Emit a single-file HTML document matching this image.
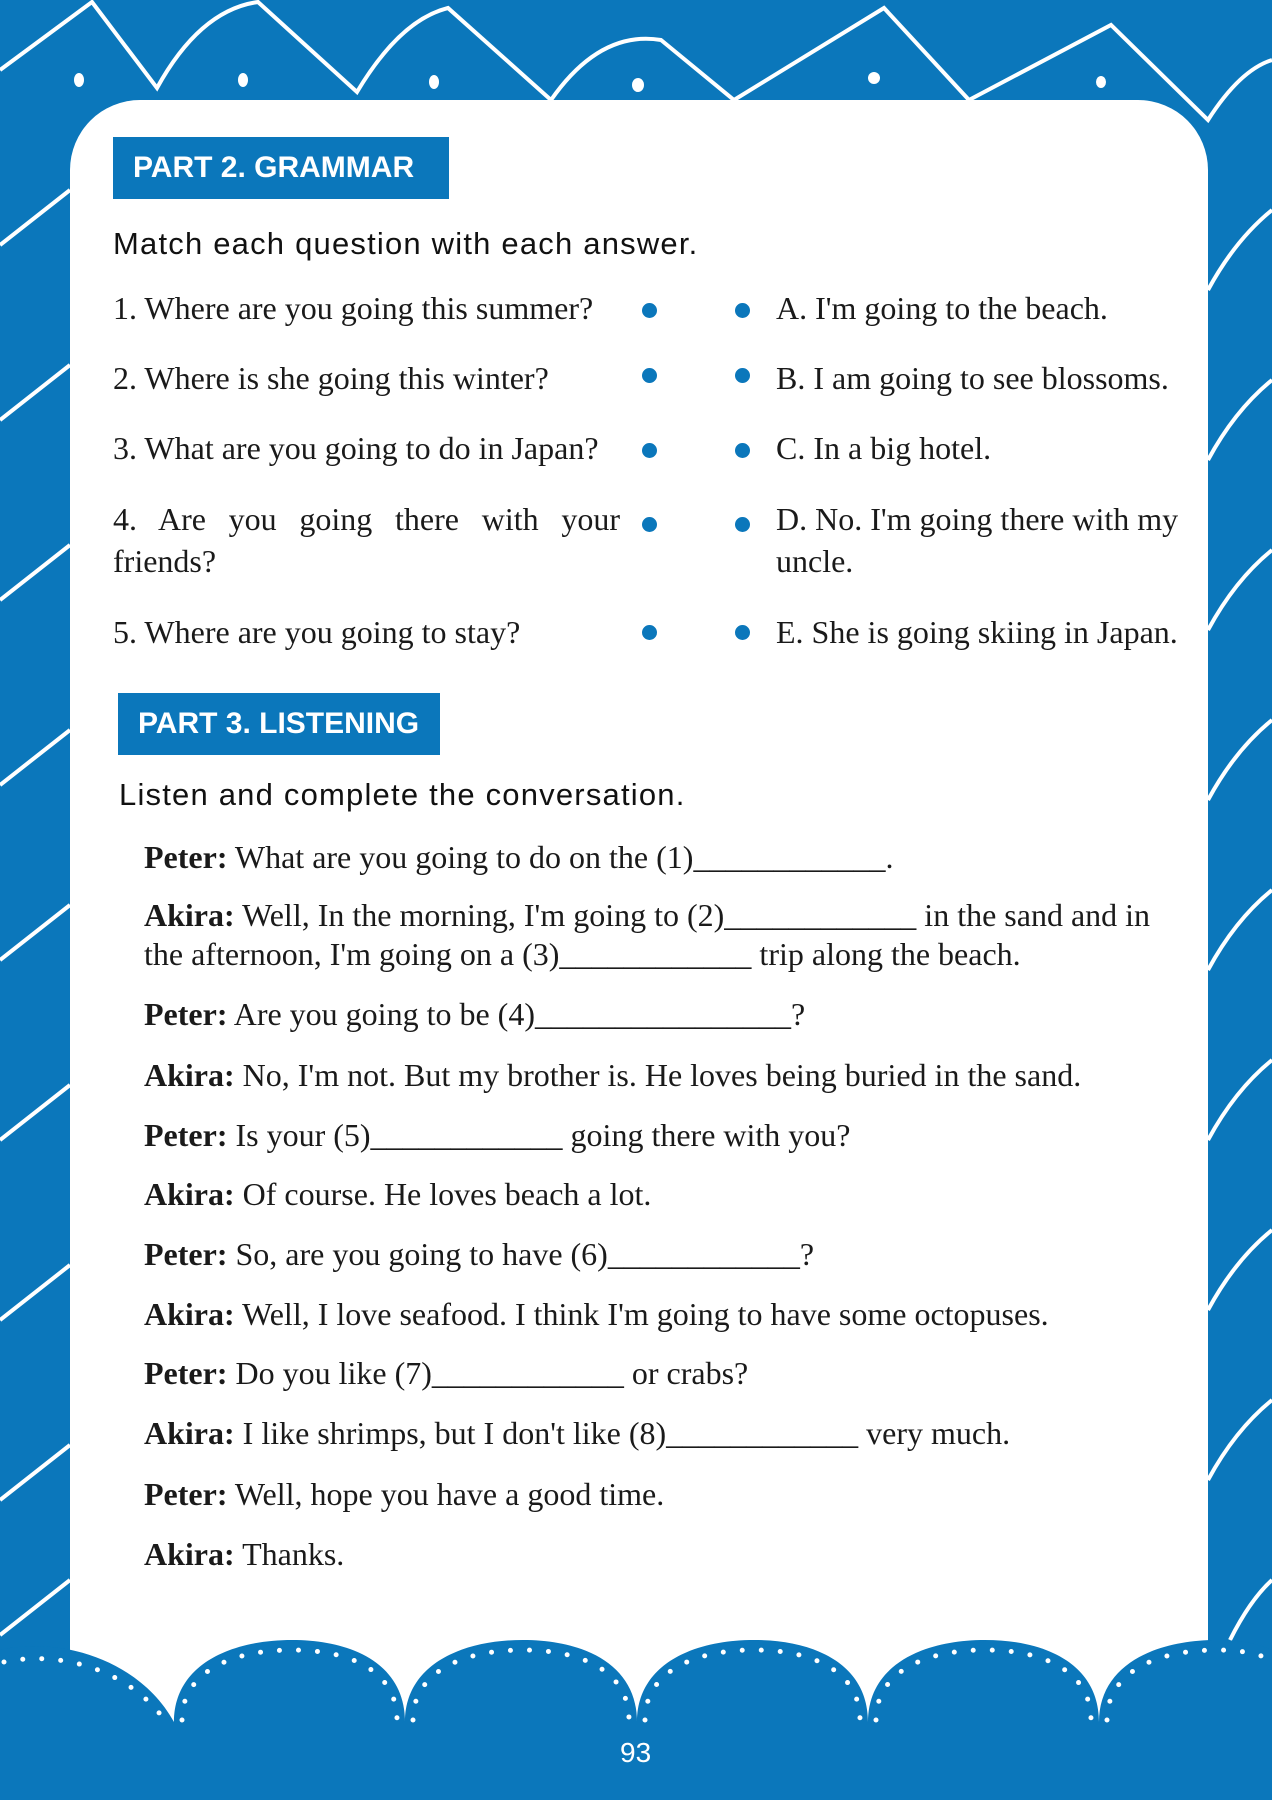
<!DOCTYPE html>
<html><head><meta charset="utf-8"><style>
*{margin:0;padding:0;box-sizing:border-box}
body{width:1272px;height:1800px;background:#0b77bb;position:relative;overflow:hidden;font-family:"Liberation Serif",serif;color:#1a1a1a}
.card{position:absolute;left:70px;top:100px;width:1138px;height:1630px;background:#fff;border-radius:70px 70px 0 0}
.hdr{position:absolute;background:#0b77bb;color:#fff;font-family:"Liberation Sans",sans-serif;font-weight:bold;font-size:30px;display:flex;align-items:center;padding-left:20px}
.sans{position:absolute;font-family:"Liberation Sans",sans-serif;font-size:31px;letter-spacing:1.2px;color:#111}
.t{position:absolute;font-size:32px;white-space:nowrap}
.dot{position:absolute;width:15px;height:15px;border-radius:50%;background:#0b77bb}
b{font-weight:bold}
</style></head><body>
<svg width="1272" height="1800" style="position:absolute;left:0;top:0" fill="none" stroke="#fff" stroke-width="4">
<path d="M0 70 L92 2 L157 88 Q200 10 258 2 L357 92 Q400 20 448 8 L551 100 Q600 30 661 40 L734 100 L884 8 L969 100 L1111 25 L1208 120 Q1240 70 1272 60"/>
<path d="M0 245 L70 190 M0 420 L70 365 M0 600 L70 545 M0 785 L70 730 M0 960 L70 905 M0 1140 L70 1085 M0 1320 L70 1265 M0 1500 L70 1445 M0 1635 L70 1580"/>
<path d="M1208 290 Q1235 240 1272 210 M1208 460 Q1235 410 1272 380 M1208 630 Q1235 580 1272 550 M1208 800 Q1235 750 1272 720 M1208 970 Q1235 920 1272 890 M1208 1140 Q1235 1090 1272 1060 M1208 1310 Q1235 1260 1272 1230 M1208 1480 Q1235 1430 1272 1400 M1230 1640 Q1250 1600 1272 1580"/>
<g fill="#fff" stroke="none"><ellipse cx="79" cy="80" rx="5" ry="7"/><ellipse cx="243" cy="80" rx="5" ry="7"/><ellipse cx="434" cy="82" rx="5" ry="7"/><ellipse cx="638" cy="85" rx="6" ry="7"/><ellipse cx="874" cy="78" rx="6" ry="6"/><ellipse cx="1101" cy="82" rx="5" ry="6"/></g>
</svg>
<div class="card"></div>
<svg width="1272" height="1800" style="position:absolute;left:0;top:0">
<path fill="#0b77bb" d="M0 1650 C60 1636 140 1660 174 1722 C174 1665 230 1640 292 1640 C354 1640 405 1665 405 1722 C405 1665 461 1640 523 1640 C585 1640 637 1665 637 1722 C637 1665 692 1640 754 1640 C816 1640 868 1665 868 1722 C868 1665 923 1640 985 1640 C1047 1640 1099 1665 1099 1722 C1099 1665 1155 1640 1217 1640 C1245 1640 1260 1645 1272 1650 L1272 1800 L0 1800 Z"/>
<path fill="none" stroke="#fff" stroke-width="5" stroke-linecap="round" stroke-dasharray="0 19" d="M4 1662 C60 1650 130 1670 166 1722 M182 1720 C182 1672 232 1650 292 1650 C352 1650 397 1672 397 1720 M413 1720 C413 1672 463 1650 523 1650 C583 1650 629 1672 629 1720 M645 1720 C645 1672 694 1650 754 1650 C814 1650 860 1672 860 1720 M876 1720 C876 1672 925 1650 985 1650 C1045 1650 1091 1672 1091 1720 M1107 1720 C1107 1672 1157 1650 1217 1650 C1245 1650 1260 1655 1272 1660"/>
</svg>
<div class="t" style="left:620px;top:1737px;color:#fff;font-family:'Liberation Sans',sans-serif;font-size:28px">93</div>

<div class="hdr" style="left:113px;top:137px;width:336px;height:62px">PART 2. GRAMMAR</div>
<div class="sans" style="left:113px;top:226px">Match each question with each answer.</div>

<div class="t" style="left:113px;top:290px">1. Where are you going this summer?</div>
<div class="t" style="left:113px;top:360px">2. Where is she going this winter?</div>
<div class="t" style="left:113px;top:430px">3. What are you going to do in Japan?</div>
<div class="t" style="left:113px;top:501px;width:507px;text-align:justify;text-align-last:justify;white-space:normal">4. Are you going there with your</div>
<div class="t" style="left:113px;top:543px">friends?</div>
<div class="t" style="left:113px;top:614px">5. Where are you going to stay?</div>
<div class="dot" style="left:642px;top:303px"></div><div class="dot" style="left:735px;top:303px"></div>
<div class="dot" style="left:642px;top:368px"></div><div class="dot" style="left:735px;top:368px"></div>
<div class="dot" style="left:642px;top:443px"></div><div class="dot" style="left:735px;top:443px"></div>
<div class="dot" style="left:642px;top:517px"></div><div class="dot" style="left:735px;top:517px"></div>
<div class="dot" style="left:642px;top:625px"></div><div class="dot" style="left:735px;top:625px"></div>
<div class="t" style="left:776px;top:290px">A. I'm going to the beach.</div>
<div class="t" style="left:776px;top:360px">B. I am going to see blossoms.</div>
<div class="t" style="left:776px;top:430px">C. In a big hotel.</div>
<div class="t" style="left:776px;top:501px">D. No. I'm going there with my</div>
<div class="t" style="left:776px;top:543px">uncle.</div>
<div class="t" style="left:776px;top:614px">E. She is going skiing in Japan.</div>

<div class="hdr" style="left:118px;top:693px;width:322px;height:62px">PART 3. LISTENING</div>
<div class="sans" style="left:119px;top:777px">Listen and complete the conversation.</div>

<div class="t" style="left:144px;top:839px"><b>Peter:</b> What are you going to do on the (1)____________.</div>
<div class="t" style="left:144px;top:897px"><b>Akira:</b> Well, In the morning, I'm going to (2)____________ in the sand and in</div>
<div class="t" style="left:144px;top:936px">the afternoon, I'm going on a (3)____________ trip along the beach.</div>
<div class="t" style="left:144px;top:996px"><b>Peter:</b> Are you going to be (4)________________?</div>
<div class="t" style="left:144px;top:1057px"><b>Akira:</b> No, I'm not. But my brother is. He loves being buried in the sand.</div>
<div class="t" style="left:144px;top:1117px"><b>Peter:</b> Is your (5)____________ going there with you?</div>
<div class="t" style="left:144px;top:1176px"><b>Akira:</b> Of course. He loves beach a lot.</div>
<div class="t" style="left:144px;top:1236px"><b>Peter:</b> So, are you going to have (6)____________?</div>
<div class="t" style="left:144px;top:1296px"><b>Akira:</b> Well, I love seafood. I think I'm going to have some octopuses.</div>
<div class="t" style="left:144px;top:1355px"><b>Peter:</b> Do you like (7)____________ or crabs?</div>
<div class="t" style="left:144px;top:1415px"><b>Akira:</b> I like shrimps, but I don't like (8)____________ very much.</div>
<div class="t" style="left:144px;top:1476px"><b>Peter:</b> Well, hope you have a good time.</div>
<div class="t" style="left:144px;top:1536px"><b>Akira:</b> Thanks.</div>
</body></html>
